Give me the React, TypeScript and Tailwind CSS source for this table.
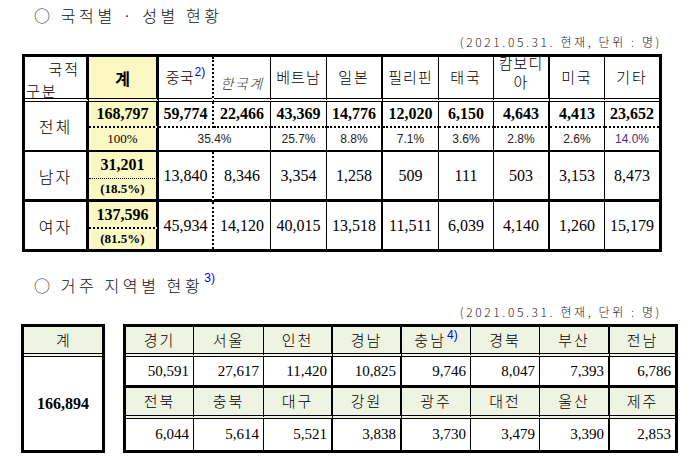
const kr = "font-['Noto_Sans_CJK_KR',sans-serif]";
const serif = "font-['Liberation_Serif','Noto_Sans_CJK_KR',serif]";
const sans = "font-['Liberation_Sans','Noto_Sans_CJK_KR',sans-serif]";

// right border of each column in the nationality table
const R1 = [
  "[border-right:3px_solid_#000]",
  "[border-right:3px_solid_#000]",
  "[border-right:2px_dotted_#000]",
  "[border-right:1px_solid_#000]",
  "[border-right:1px_solid_#000]",
  "[border-right:2px_solid_#000]",
  "[border-right:1px_solid_#000]",
  "[border-right:1px_solid_#000]",
  "[border-right:2px_solid_#000]",
  "[border-right:1px_solid_#000]",
  "",
];
const W1 = ["w-[64px]", "w-[70px]", "w-[55px]", "w-[57px]", "w-[56px]", "w-[56px]", "w-[56px]", "w-[55px]", "w-[56px]", "w-[55px]", "w-[54px]"];

const nations = [
  { total: "59,774", pct: "35.4%", male: "13,840", female: "45,934" },
  { total: "22,466", pct: "", male: "8,346", female: "14,120" },
  { total: "43,369", pct: "25.7%", male: "3,354", female: "40,015" },
  { total: "14,776", pct: "8.8%", male: "1,258", female: "13,518" },
  { total: "12,020", pct: "7.1%", male: "509", female: "11,511" },
  { total: "6,150", pct: "3.6%", male: "111", female: "6,039" },
  { total: "4,643", pct: "2.8%", male: "503", female: "4,140" },
  { total: "4,413", pct: "2.6%", male: "3,153", female: "1,260" },
  { total: "23,652", pct: "14.0%", male: "8,473", female: "15,179" },
];

const R2 = [
  "[border-right:1px_solid_#000]",
  "[border-right:1px_solid_#000]",
  "[border-right:2px_solid_#000]",
  "[border-right:2px_solid_#000]",
  "[border-right:1px_solid_#000]",
  "[border-right:1px_solid_#000]",
  "[border-right:2px_solid_#000]",
  "",
];
const W2 = ["w-[68px]", "w-[70px]", "w-[69px]", "w-[69px]", "w-[69px]", "w-[69px]", "w-[70px]", "w-[65px]"];

const regions1 = [
  ["경기", "50,591"],
  ["서울", "27,617"],
  ["인천", "11,420"],
  ["경남", "10,825"],
  ["충남", "9,746"],
  ["경북", "8,047"],
  ["부산", "7,393"],
  ["전남", "6,786"],
];
const regions2 = [
  ["전북", "6,044"],
  ["충북", "5,614"],
  ["대구", "5,521"],
  ["강원", "3,838"],
  ["광주", "3,730"],
  ["대전", "3,479"],
  ["울산", "3,390"],
  ["제주", "2,853"],
];

function Note({ n }: { n: string }) {
  return <span className={`${sans} relative -top-[7px] ml-[1px] text-[12px] tracking-normal text-[#0000ff]`}>{n}</span>;
}

function Title({ children }: { children: React.ReactNode }) {
  return (
    <div className={`${kr} flex h-[30px] items-center pl-[34px] text-[16px] font-light tracking-[3.6px] text-[#111]`}>
      {children}
    </div>
  );
}

function DateLine() {
  return (
    <div className={`${kr} flex h-[24px] items-center justify-end pr-[31px] text-[12px] font-light tracking-[2.6px] text-[#222]`}>
      (2021.05.31. 현재, 단위 : 명)
    </div>
  );
}

const yellow = "bg-[#fbf8c4]";
const green = "bg-[#eef3e2]";
const dblB = "[border-bottom:4px_double_#000]";

export default function App() {
  const headerCols = [
    <span>
      중국
      <Note n="2)" />
    </span>,
    <span className="relative top-[6px] text-[14px] italic tracking-[1.5px] text-[#333]">한국계</span>,
    <span className="tracking-[1px]">베트남</span>,
    <span className="tracking-[2px]">일본</span>,
    <span className="tracking-[1px]">필리핀</span>,
    <span className="tracking-[2px]">태국</span>,
    <span className="block -mt-[12px] leading-[19px] tracking-[1px]">
      캄보디
      <br />아
    </span>,
    <span className="tracking-[2px]">미국</span>,
    <span className="tracking-[2px]">기타</span>,
  ];

  return (
    <div className="h-[468px] w-[693px] overflow-hidden bg-white text-black">
      <Title>○ 국적별 · 성별 현황</Title>
      <DateLine />

      <table className="ml-[22px] w-[640px] table-fixed border-separate border-spacing-0 border-[3px] border-black">
        <colgroup>
          {W1.map((w, i) => (
            <col key={i} className={w} />
          ))}
        </colgroup>
        <tbody>
          {/* header */}
          <tr className="h-[45px]">
            <td className={`${R1[0]} ${dblB} ${kr} p-0 align-top text-[15px] font-light`}>
              <div className="flex h-[41px] flex-col justify-between">
                <div className="pr-[6px] pt-[1px] text-right tracking-[2px]">국적</div>
                <div className="pl-[1px] leading-[20px] tracking-[2px]">구분</div>
              </div>
            </td>
            <td className={`${R1[1]} ${dblB} ${yellow} ${kr} p-0 text-center text-[16px] font-bold`}>계</td>
            {headerCols.map((h, i) => (
              <td key={i} className={`${R1[i + 2]} ${dblB} ${kr} p-0 text-center text-[15px] font-light`}>
                {h}
              </td>
            ))}
          </tr>

          {/* 전체 */}
          <tr className="h-[26px]">
            <td rowSpan={2} className={`${R1[0]} [border-bottom:2px_solid_#000] ${kr} p-0 text-center text-[16px] font-light tracking-[2px]`}>
              전체
            </td>
            <td className={`${R1[1]} [border-bottom:2px_dotted_#000] ${yellow} ${serif} p-0 text-center text-[16px] font-bold`}>
              168,797
            </td>
            {nations.map((n, i) => (
              <td key={i} className={`${R1[i + 2]} [border-bottom:2px_dotted_#000] ${serif} p-0 text-center text-[16px] font-bold`}>
                {n.total}
              </td>
            ))}
          </tr>
          <tr className="h-[24px]">
            <td className={`${R1[1]} [border-bottom:2px_solid_#000] ${yellow} ${serif} p-0 text-center text-[13px]`}>100%</td>
            <td colSpan={2} className={`${R1[3]} [border-bottom:2px_solid_#000] ${sans} p-0 text-center text-[12px] text-[#222]`}>
              35.4%
            </td>
            {nations.slice(2).map((n, i) => (
              <td
                key={i}
                className={`${R1[i + 4]} [border-bottom:2px_solid_#000] ${sans} p-0 text-center text-[12px] ${
                  i === 6 ? "text-[#5a2a6a]" : "text-[#222]"
                }`}
              >
                {n.pct}
              </td>
            ))}
          </tr>

          {/* 남자 */}
          <tr className="h-[27px]">
            <td rowSpan={2} className={`${R1[0]} [border-bottom:3px_solid_#000] ${kr} p-0 text-center text-[16px] font-light tracking-[2px]`}>
              남자
            </td>
            <td className={`${R1[1]} [border-bottom:1px_dotted_#000] ${yellow} ${serif} p-0 text-center text-[16px] font-bold`}>
              31,201
            </td>
            {nations.map((n, i) => (
              <td key={i} rowSpan={2} className={`${R1[i + 2]} [border-bottom:3px_solid_#000] ${serif} p-0 text-center text-[16px]`}>
                {n.male}
              </td>
            ))}
          </tr>
          <tr className="h-[23px]">
            <td className={`${R1[1]} [border-bottom:3px_solid_#000] ${yellow} ${serif} p-0 text-center text-[13px] font-bold`}>
              (18.5%)
            </td>
          </tr>

          {/* 여자 */}
          <tr className="h-[27px]">
            <td rowSpan={2} className={`${R1[0]} ${kr} p-0 text-center text-[16px] font-light tracking-[2px]`}>
              여자
            </td>
            <td className={`${R1[1]} [border-bottom:2px_dotted_#000] ${yellow} ${serif} p-0 text-center text-[16px] font-bold`}>
              137,596
            </td>
            {nations.map((n, i) => (
              <td key={i} rowSpan={2} className={`${R1[i + 2]} ${serif} p-0 text-center text-[16px]`}>
                {n.female}
              </td>
            ))}
          </tr>
          <tr className="h-[20px]">
            <td className={`${R1[1]} ${yellow} ${serif} p-0 text-center text-[13px] font-bold`}>(81.5%)</td>
          </tr>
        </tbody>
      </table>

      <div className="mt-[18px]">
        <Title>
          ○ 거주 지역별 현황
          <Note n="3)" />
        </Title>
        <DateLine />
      </div>

      <div className="flex items-start">
        <table className="ml-[21px] w-[84px] table-fixed border-separate border-spacing-0 border-[3px] border-black">
          <tbody>
            <tr className="h-[30px]">
              <td className={`${dblB} ${green} ${kr} p-0 text-center text-[15px] font-light`}>계</td>
            </tr>
            <tr className="h-[93px]">
              <td className={`${serif} p-0 text-center text-[16px] font-bold`}>166,894</td>
            </tr>
          </tbody>
        </table>

        <table className="ml-[18px] w-[555px] table-fixed border-separate border-spacing-0 border-[3px] border-black">
          <colgroup>
            {W2.map((w, i) => (
              <col key={i} className={w} />
            ))}
          </colgroup>
          <tbody>
            {[regions1, regions2].map((rows, r) => [
              <tr key={`h${r}`} className={r === 0 ? "h-[30px]" : "h-[31px]"}>
                {rows.map(([name], i) => (
                  <td key={i} className={`${R2[i]} ${dblB} ${green} ${kr} p-0 text-center text-[15px] font-light tracking-[2px]`}>
                    {name}
                    {name === "충남" && <Note n="4)" />}
                  </td>
                ))}
              </tr>,
              <tr key={`v${r}`} className="h-[31px]">
                {rows.map(([, v], i) => (
                  <td
                    key={i}
                    className={`${R2[i]} ${r === 0 ? "[border-bottom:3px_solid_#000]" : ""} ${serif} p-0 pr-[4px] text-right text-[15px]`}
                  >
                    {v}
                  </td>
                ))}
              </tr>,
            ])}
          </tbody>
        </table>
      </div>
    </div>
  );
}
